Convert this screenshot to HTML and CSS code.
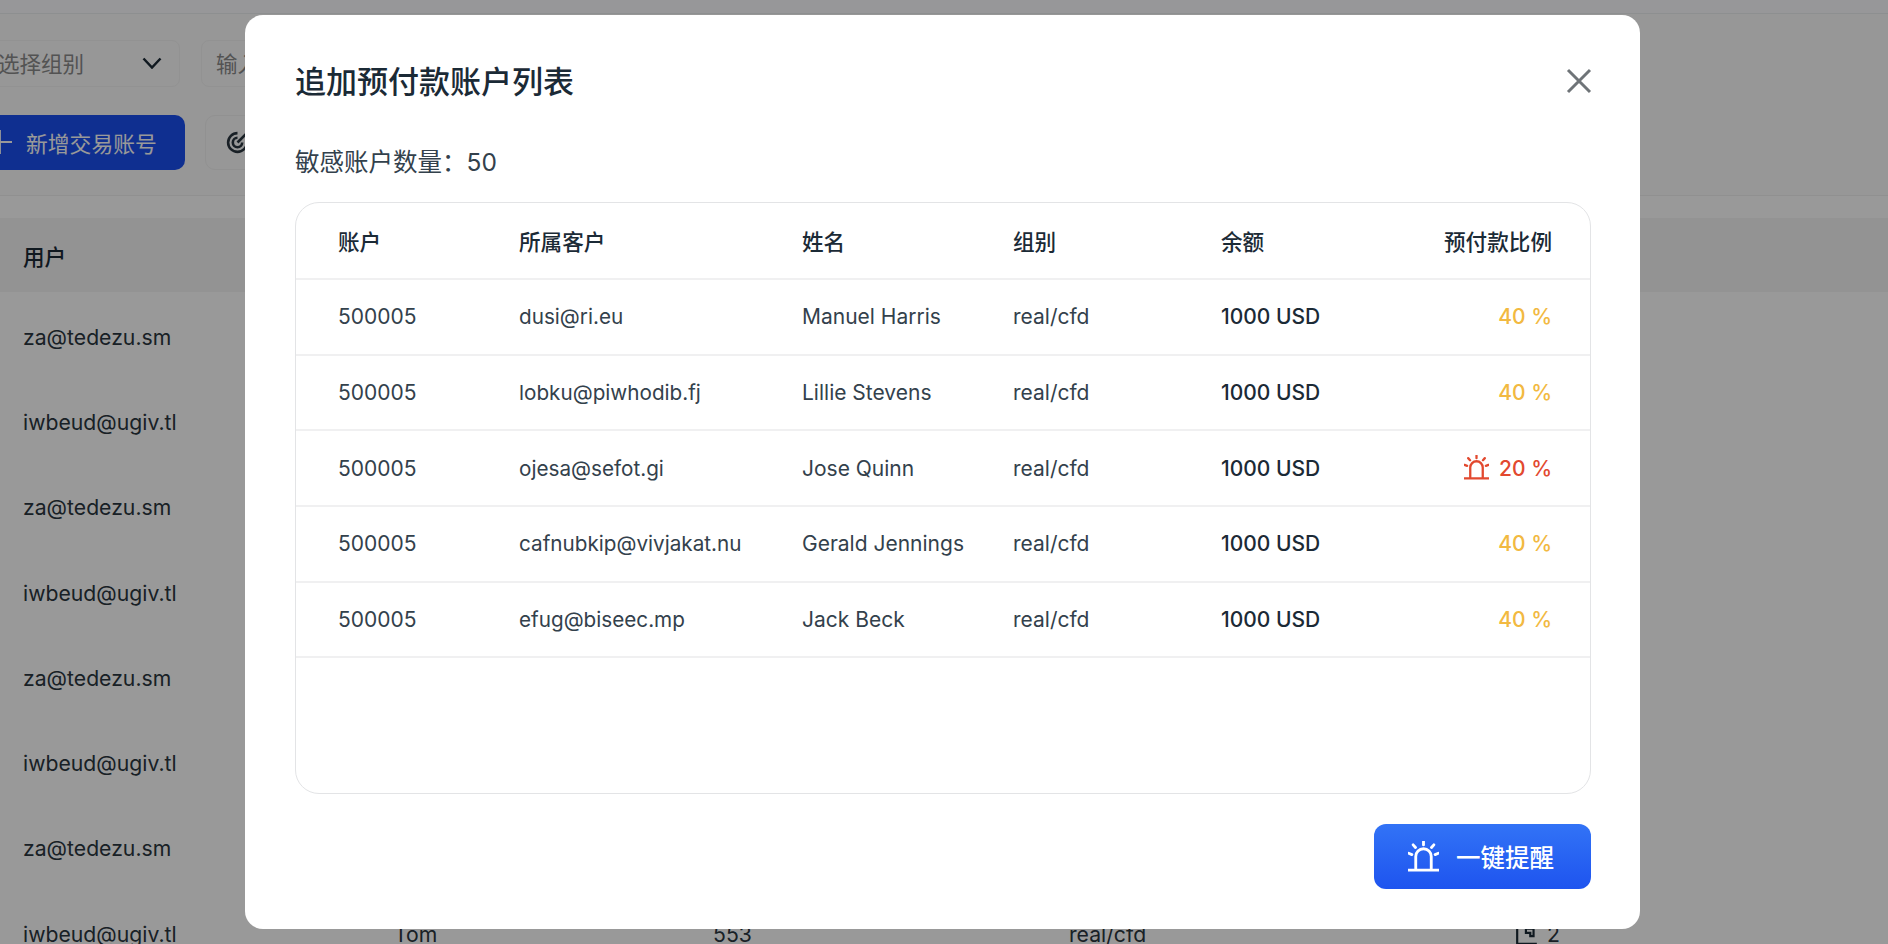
FILE: index.html
```html
<!DOCTYPE html>
<html lang="zh-CN">
<head>
    <meta charset="utf-8">
    <link rel="stylesheet" href="styles.css">
    <title>追加预付款账户列表</title>
</head>
<body>
    <div class="page">
        <div class="top-bar"></div>
        <div class="toolbar">
            <div class="filter-row">
                <div class="select-box">
                    <span>选择组别</span>
                    <svg class="chevron" viewBox="0 0 20 12"><path d="M1.5 1.5 10 10.5l8.500-9"/></svg>
                </div>
                <div class="search-box">输入账号</div>
            </div>
            <div class="action-row">
                <div class="add-btn">
                    <svg class="plus" viewBox="0 0 26 26"><path d="M13 1v24M1 13h24"/></svg>
                    新增交易账号
                </div>
                <div class="ghost-btn">
                    <svg class="target" viewBox="0 0 24 24">
                        <path d="M21 12a9 9 0 1 1-9-9"/>
                        <path d="M16.500 12a4.500 4.500 0 1 1-4.500-4.500"/>
                        <path d="M12 12 20 4"/>
                    </svg>
                </div>
            </div>
        </div>
        <div class="bg-table">
            <div class="bg-head"><span>用户</span></div>
            <div class="bg-row"><span>za@tedezu.sm</span></div>
            <div class="bg-row"><span>iwbeud@ugiv.tl</span></div>
            <div class="bg-row"><span>za@tedezu.sm</span></div>
            <div class="bg-row"><span>iwbeud@ugiv.tl</span></div>
            <div class="bg-row"><span>za@tedezu.sm</span></div>
            <div class="bg-row"><span>iwbeud@ugiv.tl</span></div>
            <div class="bg-row"><span>za@tedezu.sm</span></div>
            <div class="bg-row">
                <span>iwbeud@ugiv.tl</span>
                <span>Tom</span>
                <span>553</span>
                <span>real/cfd</span>
                <span class="bg-count">
                    <svg class="doc-icon" viewBox="0 0 22 22"><path d="M2 1v19h18"/><path d="M10 6h7v7h-3v-3h-4z"/></svg>2
                </span>
            </div>
        </div>
    </div>

    <div class="overlay">
        <div class="modal">
            <div class="modal-head">
                <h2 class="modal-title">追加预付款账户列表</h2>
                <svg class="close-icon" viewBox="0 0 26 26"><path d="M2 2l22 22M24 2 2 24"/></svg>
            </div>
            <p class="count-line">敏感账户数量：50</p>
            <div class="table-card">
                <table class="account-table">
                    <colgroup>
                        <col class="col-account">
                        <col class="col-client">
                        <col class="col-name">
                        <col class="col-group">
                        <col class="col-balance">
                        <col>
                    </colgroup>
                    <thead>
                        <tr>
                            <th>账户</th>
                            <th>所属客户</th>
                            <th>姓名</th>
                            <th>组别</th>
                            <th>余额</th>
                            <th class="ratio">预付款比例</th>
                        </tr>
                    </thead>
                    <tbody>
                        <tr>
                            <td>500005</td>
                            <td class="email">dusi@ri.eu</td>
                            <td>Manuel Harris</td>
                            <td>real/cfd</td>
                            <td class="balance">1000 USD</td>
                            <td class="ratio warn">40 %</td>
                        </tr>
                        <tr>
                            <td>500005</td>
                            <td class="email">lobku@piwhodib.fj</td>
                            <td>Lillie Stevens</td>
                            <td>real/cfd</td>
                            <td class="balance">1000 USD</td>
                            <td class="ratio warn">40 %</td>
                        </tr>
                        <tr>
                            <td>500005</td>
                            <td class="email">ojesa@sefot.gi</td>
                            <td>Jose Quinn</td>
                            <td>real/cfd</td>
                            <td class="balance">1000 USD</td>
                            <td class="ratio danger">
                                <svg class="siren siren-small" viewBox="0 0 24 24">
                                    <path d="M6 21.500V12a6 6 0 0 1 12 0v9.500"/>
                                    <path d="M0.500 22.500h23"/>
                                    <path d="M12 0.500v2.500M4 3l1.800 2M20 3l-1.800 2M0.500 9.500l2.500 1M23.500 9.500l-2.500 1"/>
                                </svg>20 %
                            </td>
                        </tr>
                        <tr>
                            <td>500005</td>
                            <td class="email">cafnubkip@vivjakat.nu</td>
                            <td>Gerald Jennings</td>
                            <td>real/cfd</td>
                            <td class="balance">1000 USD</td>
                            <td class="ratio warn">40 %</td>
                        </tr>
                        <tr>
                            <td>500005</td>
                            <td class="email">efug@biseec.mp</td>
                            <td>Jack Beck</td>
                            <td>real/cfd</td>
                            <td class="balance">1000 USD</td>
                            <td class="ratio warn">40 %</td>
                        </tr>
                    </tbody>
                </table>
            </div>
            <div class="modal-foot">
                <button class="remind-btn">
                    <svg class="siren siren-big" viewBox="0 0 24 24">
                        <path d="M6 21.500V12a6 6 0 0 1 12 0v9.500"/>
                        <path d="M0.500 22.500h23"/>
                        <path d="M12 0.500v2.500M4 3l1.800 2M20 3l-1.800 2M0.500 9.500l2.500 1M23.500 9.500l-2.500 1"/>
                    </svg>
                    一键提醒
                </button>
            </div>
        </div>
    </div>
</body>
</html>
```

FILE: styles.css
```css
* {
    margin: 0;
    padding: 0;
    box-sizing: border-box;
}

html,
body {
    height: 100%;
    overflow: hidden;
}

body {
    font-family: Inter, "Noto Sans CJK SC", sans-serif;
    color: #1b2a36;
    background-color: #fff;
}

/* page behind the dialog */
.top-bar {
    height: 14px;
    background-color: #fcfcff;
    border-bottom: 1px solid #eceef0;
}

.toolbar {
    height: 182px;
    padding-top: 26px;
    background-color: #fcfcfc;
    border-bottom: 1px solid #f0f0f0;
}

.filter-row {
    display: flex;
    gap: 21px;
}

.select-box,
.search-box {
    height: 47px;
    display: flex;
    align-items: center;
    border: 1px solid #f4f4f4;
    border-radius: 8px;
    font-size: 21.500px;
    color: #8a8a8a;
}

.select-box {
    width: 204px;
    margin-left: -24px;
    padding: 0 17px 2px 21px;
    justify-content: space-between;
}

.search-box {
    width: 300px;
    padding: 0 0 2px 14px;
}

.chevron {
    width: 20px;
    height: 12px;
    fill: none;
    stroke: #1b2a36;
    stroke-width: 2.5;
}

.action-row {
    display: flex;
    gap: 20px;
    margin-top: 28px;
}

.add-btn {
    width: 209px;
    height: 55px;
    margin-left: -24px;
    padding-bottom: 1px;
    display: flex;
    align-items: center;
    background-color: #1a4ff0;
    border-radius: 10px;
    color: #fff;
    font-size: 21.800px;
}

.plus {
    width: 26px;
    height: 26px;
    margin: 0 13px 0 11px;
    fill: none;
    stroke: #fff;
    stroke-width: 1.800;
}

.ghost-btn {
    width: 200px;
    height: 55px;
    padding-left: 19px;
    display: flex;
    align-items: center;
    border: 1px solid #f2f2f2;
    border-radius: 10px;
}

.target {
    width: 25px;
    height: 25px;
    fill: none;
    stroke: #2b3640;
    stroke-width: 2.5;
}

.bg-table {
    margin-top: 22px;
}

.bg-head,
.bg-row {
    display: grid;
    grid-template-columns: 371px 319px 356px 446px 1fr;
    align-items: center;
    padding-left: 23px;
    font-size: 21.200px;
}

.bg-head {
    height: 74px;
    margin-bottom: 2px;
    background-color: #f6f6f6;
    font-size: 21.600px;
    font-weight: 500;
}

.bg-row {
    height: 85.3px;
    color: #2b3640;
}

.bg-count {
    display: flex;
    align-items: center;
    gap: 8px;
}

.doc-icon {
    width: 24px;
    height: 24px;
    fill: none;
    stroke: #1b2a36;
    stroke-width: 2;
}

/* dialog */
.overlay {
    position: fixed;
    top: 0;
    right: 0;
    bottom: 0;
    left: 0;
    padding: 15px 0 0 245px;
    background-color: rgba(0, 0, 0, 0.4);
}

.modal {
    width: 1395px;
    height: 914px;
    padding: 39px 49px 40px 50px;
    background-color: #fff;
    border-radius: 18px;
}

.modal-head {
    height: 50px;
    display: flex;
    align-items: center;
    justify-content: space-between;
}

.modal-title {
    font-size: 31px;
    font-weight: 500;
    color: #1b2a36;
}

.close-icon {
    width: 26px;
    height: 26px;
    margin: 3px -1px 0 0;
    fill: none;
    stroke: #6f7478;
    stroke-width: 3;
}

.count-line {
    margin-top: 41px;
    font-size: 24.500px;
    line-height: 34px;
    color: #33414c;
}

.table-card {
    height: 592px;
    margin-top: 23px;
    border: 1px solid #e3e4e6;
    border-radius: 24px;
    overflow: hidden;
}

.account-table {
    width: 100%;
    table-layout: fixed;
    border-collapse: collapse;
    font-size: 21px;
}

.col-account { width: 223px; }
.col-client { width: 283px; }
.col-name { width: 211px; }
.col-group { width: 208px; }
.col-balance { width: 160px; }

.account-table th,
.account-table td {
    text-align: left;
    white-space: nowrap;
    border-bottom: 2px solid #f0f0f1;
}

.account-table th {
    height: 76px;
    font-size: 21.600px;
    font-weight: 500;
    color: #1b2a36;
}

.account-table td {
    height: 75.700px;
    color: #33414c;
}

.account-table th:first-child,
.account-table td:first-child {
    padding-left: 42px;
}

.account-table .email {
    font-size: 20.700px;
}

.account-table .balance {
    font-weight: 500;
    color: #1b2a36;
}

.account-table .ratio {
    text-align: right;
    padding-right: 38px;
}

.account-table .warn {
    font-weight: 500;
    color: #f2b941;
}

.account-table .danger {
    font-weight: 500;
    color: #e2492f;
}

.siren {
    fill: none;
    stroke: currentColor;
    stroke-width: 2.200;
    stroke-linecap: round;
}

.siren-small {
    width: 25px;
    height: 25px;
    margin-right: 10px;
    vertical-align: -4px;
}

.siren-big {
    width: 31px;
    height: 31px;
}

.modal-foot {
    margin-top: 30px;
    display: flex;
    justify-content: flex-end;
}

.remind-btn {
    width: 217px;
    height: 65px;
    padding-right: 3px;
    display: flex;
    align-items: center;
    justify-content: center;
    gap: 17px;
    border: none;
    border-radius: 12px;
    background: linear-gradient(#3273f6, #1e54ef);
    color: #fff;
    font-family: inherit;
    font-size: 24.500px;
    font-weight: 500;
}
```
